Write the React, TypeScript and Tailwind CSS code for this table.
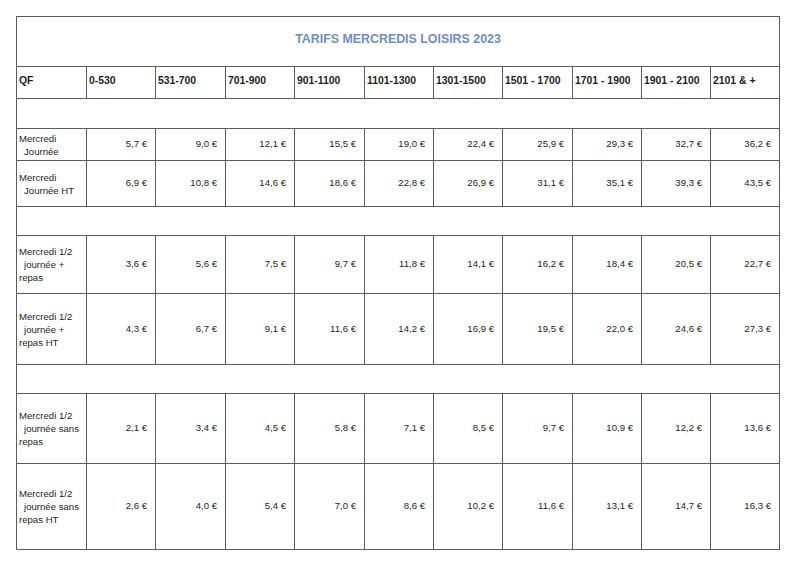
const columns = [
  'QF',
  '0-530',
  '531-700',
  '701-900',
  '901-1100',
  '1101-1300',
  '1301-1500',
  '1501 - 1700',
  '1701 - 1900',
  '1901 - 2100',
  '2101 & +'
]

const colWidths = [70, 69, 70, 69, 70, 69, 69, 70, 69, 69, 69]

type Row = { label: string[]; height: number; values: string[] } | { blank: true; height: number }

const rows: Row[] = [
  { blank: true, height: 30 },
  {
    label: ['Mercredi', 'Journée'],
    height: 32,
    values: ['5,7', '9,0', '12,1', '15,5', '19,0', '22,4', '25,9', '29,3', '32,7', '36,2']
  },
  {
    label: ['Mercredi', 'Journée HT'],
    height: 46,
    values: ['6,9', '10,8', '14,6', '18,6', '22,8', '26,9', '31,1', '35,1', '39,3', '43,5']
  },
  { blank: true, height: 29 },
  {
    label: ['Mercredi 1/2', 'journée +', 'repas'],
    height: 58,
    values: ['3,6', '5,6', '7,5', '9,7', '11,8', '14,1', '16,2', '18,4', '20,5', '22,7']
  },
  {
    label: ['Mercredi 1/2', 'journée +', 'repas HT'],
    height: 71,
    values: ['4,3', '6,7', '9,1', '11,6', '14,2', '16,9', '19,5', '22,0', '24,6', '27,3']
  },
  { blank: true, height: 29 },
  {
    label: ['Mercredi 1/2', 'journée sans', 'repas'],
    height: 70,
    values: ['2,1', '3,4', '4,5', '5,8', '7,1', '8,5', '9,7', '10,9', '12,2', '13,6']
  },
  {
    label: ['Mercredi 1/2', 'journée sans', 'repas HT'],
    height: 86,
    values: ['2,6', '4,0', '5,4', '7,0', '8,6', '10,2', '11,6', '13,1', '14,7', '16,3']
  }
]

const cell = 'border border-[#5c5c5c] p-0'

export default function App() {
  return (
    <div className="h-[579px] w-[800px] bg-white pl-4 pt-4 font-['Liberation_Sans',Arial,sans-serif] text-[#1e1e1e]">
      <table className="w-[764px] table-fixed border-collapse border border-[#8a8a8a]">
        <colgroup>
          {colWidths.map((w, i) => (
            <col key={i} style={{ width: w }} />
          ))}
        </colgroup>
        <tbody>
          <tr className="h-[50px]">
            <td colSpan={11} className={`${cell} text-center align-middle`}>
              <span className="relative top-[-4px] text-[12.4px] font-bold text-[#6c8ec8]">
                TARIFS MERCREDIS LOISIRS 2023
              </span>
            </td>
          </tr>
          <tr className="h-[32px]">
            {columns.map(c => (
              <td
                key={c}
                className={`${cell} whitespace-nowrap pl-[2px] align-middle text-[10.4px] font-bold`}
              >
                <span className="relative top-[-2px]">{c}</span>
              </td>
            ))}
          </tr>
          {rows.map((row, i) =>
            'blank' in row ? (
              <tr key={i} style={{ height: row.height }}>
                <td colSpan={11} className={cell} />
              </tr>
            ) : (
              <tr key={i} style={{ height: row.height }}>
                <td className={`${cell} pl-[2px] align-middle text-[9.6px] leading-[13px]`}>
                  {row.label.map((line, j) => (
                    <div key={j} className={j === 1 ? 'whitespace-nowrap pl-[5px]' : 'whitespace-nowrap'}>
                      {line}
                    </div>
                  ))}
                </td>
                {row.values.map((v, j) => (
                  <td key={j} className={`${cell} pr-[8px] text-right align-middle text-[9.6px]`}>
                    {v} €
                  </td>
                ))}
              </tr>
            )
          )}
        </tbody>
      </table>
    </div>
  )
}
